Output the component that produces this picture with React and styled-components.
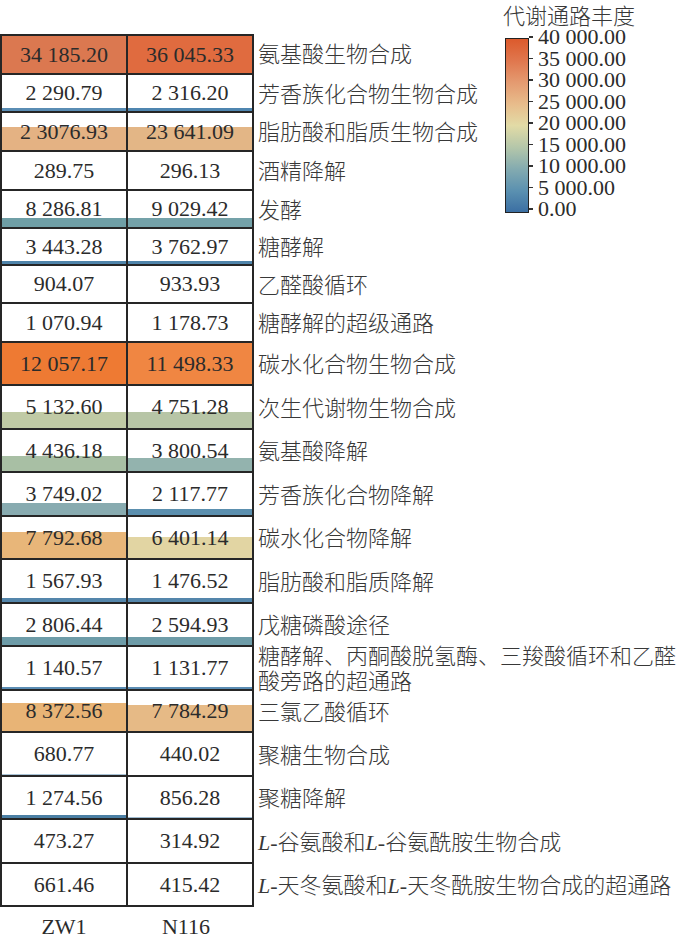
import React from 'react';
import styled, { createGlobalStyle } from 'styled-components';

const GlobalStyle = createGlobalStyle`
  html, body {
    margin: 0;
    padding: 0;
    background: #ffffff;
  }
`;

const LINE = '#262626';
const FULL = '100%';

// h = row height in px, fa/fb = [fill height, colour] for each column
const rows = [
  { a: '34 185.20', b: '36 045.33', label: '氨基酸生物合成', h: 39, fa: [FULL, '#db7850'], fb: [FULL, '#e06b3f'] },
  { a: '2 290.79', b: '2 316.20', label: '芳香族化合物生物合成', h: 38, fa: ['3px', '#5a8db4'], fb: ['3px', '#4f86b0'] },
  { a: '2 3076.93', b: '23 641.09', label: '脂肪酸和脂质生物合成', h: 39, fa: ['23px', '#e4b283'], fb: ['23px', '#e3b686'] },
  { a: '289.75', b: '296.13', label: '酒精降解', h: 39 },
  { a: '8 286.81', b: '9 029.42', label: '发酵', h: 38, fa: ['9px', '#6f9fa6'], fb: ['9px', '#74a2a9'] },
  { a: '3 443.28', b: '3 762.97', label: '糖酵解', h: 37, fa: ['3px', '#4f84aa'], fb: ['3px', '#4f84aa'] },
  { a: '904.07', b: '933.93', label: '乙醛酸循环', h: 38 },
  { a: '1 070.94', b: '1 178.73', label: '糖酵解的超级通路', h: 39 },
  { a: '12 057.17', b: '11 498.33', label: '碳水化合物生物合成', h: 43, fa: [FULL, '#ee7a33'], fb: [FULL, '#f08642'] },
  { a: '5 132.60', b: '4 751.28', label: '次生代谢物生物合成', h: 44, fa: ['16px', '#c0caa5'], fb: ['16px', '#b7c5a6'] },
  { a: '4 436.18', b: '3 800.54', label: '氨基酸降解', h: 43, fa: ['15px', '#a8bfa4'], fb: ['13px', '#93b3ae'] },
  { a: '3 749.02', b: '2 117.77', label: '芳香族化合物降解', h: 44, fa: ['12px', '#88abb0'], fb: ['6px', '#5b8fae'] },
  { a: '7 792.68', b: '6 401.14', label: '碳水化合物降解', h: 43, fa: ['26px', '#e8b679'], fb: ['21px', '#e2d5a3'] },
  { a: '1 567.93', b: '1 476.52', label: '脂肪酸和脂质降解', h: 44, fa: ['4px', '#5486ab'], fb: ['4px', '#5486ab'] },
  { a: '2 806.44', b: '2 594.93', label: '戊糖磷酸途径', h: 43, fa: ['8px', '#6e9ca8'], fb: ['8px', '#6e9ca8'] },
  { a: '1 140.57', b: '1 131.77', label: ['糖酵解、丙酮酸脱氢酶、三羧酸循环和乙醛', '酸旁路的超通路'], h: 44, fa: ['2px', '#5b8db4'], fb: ['2px', '#5b8db4'] },
  { a: '8 372.56', b: '7 784.29', label: '三氯乙酸循环', h: 42, fa: ['28px', '#e8b476'], fb: ['26px', '#e6ba86'] },
  { a: '680.77', b: '440.02', label: '聚糖生物合成', h: 44, fa: ['1px', '#a9c3d6'] },
  { a: '1 274.56', b: '856.28', label: '聚糖降解', h: 43, fa: ['3px', '#4b7fa4'], fb: ['1px', '#9fbbd0'] },
  { a: '473.27', b: '314.92', label: [['L', '-谷氨酸和'], ['L', '-谷氨酰胺生物合成']], h: 44 },
  { a: '661.46', b: '415.42', label: [['L', '-天冬氨酸和'], ['L', '-天冬酰胺生物合成的超通路']], h: 43 },
];

const ticks = ['40 000.00', '35 000.00', '30 000.00', '25 000.00', '20 000.00', '15 000.00', '10 000.00', '5 000.00', '0.00'];

const Page = styled.div`
  position: relative;
  width: 677px;
  padding-top: 34px;
  font-family: "Liberation Serif", "Noto Sans CJK SC", serif;
  color: #2b2b2b;
`;

const Table = styled.div`
  display: flex;
  flex-direction: column;
`;

const Row = styled.div`
  display: flex;
  align-items: stretch;
  height: ${p => p.$h + (p.$top ? 2 : 0)}px;
`;

const Cell = styled.div`
  box-sizing: border-box;
  width: ${p => (p.$lead ? 128 : 126)}px;
  flex-shrink: 0;
  display: flex;
  align-items: center;
  justify-content: center;
  border-right: 2px solid ${LINE};
  border-bottom: 2px solid ${LINE};
  ${p => p.$lead && `border-left: 2px solid ${LINE};`}
  ${p => p.$top && `border-top: 2px solid ${LINE};`}
  background: ${p =>
    p.$fill ? `linear-gradient(to top, ${p.$color} 0, ${p.$color} ${p.$fill}, transparent ${p.$fill})` : 'transparent'};
  font-family: "Liberation Serif", serif;
  font-size: 22px;
  line-height: 24px;
  color: #2b2b2b;
`;

const Label = styled.div`
  flex: 1;
  display: flex;
  flex-direction: column;
  justify-content: center;
  padding-left: 4px;
  font-family: "Liberation Serif", "Noto Sans CJK SC", serif;
  font-size: 22px;
  font-weight: 300;
  line-height: 25px;
  white-space: nowrap;
  color: #383838;
`;

const Ital = styled.i`
  font-style: italic;
  font-weight: 400;
`;

const Footer = styled.div`
  display: flex;
  margin-top: 9px;
  padding-bottom: 6px;
`;

const FooterCell = styled.div`
  width: ${p => (p.$lead ? 128 : 126)}px;
  padding-right: ${p => p.$nudge || 0}px;
  box-sizing: border-box;
  text-align: center;
  font-family: "Liberation Serif", serif;
  font-size: 22px;
  line-height: 22px;
  color: #2b2b2b;
`;

const Legend = styled.div`
  position: absolute;
  top: 3px;
  left: 503px;
  display: flex;
  flex-direction: column;
`;

const LegendTitle = styled.div`
  font-family: "Noto Sans CJK SC", sans-serif;
  font-size: 22px;
  font-weight: 300;
  line-height: 22px;
  color: #383838;
`;

const LegendBody = styled.div`
  display: flex;
  margin-top: 13px;
  margin-left: 2px;
`;

const ColorBar = styled.div`
  box-sizing: border-box;
  width: 24px;
  height: 175px;
  border: 1.5px solid #222222;
  background: linear-gradient(
    to top,
    #3b6fa3 0%,
    #5a90b0 12%,
    #84abb0 25%,
    #b3c6aa 37%,
    #e2dba6 50%,
    #e8bd8c 62%,
    #e49a70 75%,
    #e0784f 87%,
    #dc5a2c 100%
  );
`;

const TickList = styled.div`
  display: flex;
  flex-direction: column;
  margin-top: -12px;
`;

const Tick = styled.div`
  display: flex;
  align-items: center;
  height: 21.5px;
  font-family: "Liberation Serif", serif;
  font-size: 22px;
  line-height: 21.5px;
  color: #2b2b2b;
  white-space: nowrap;

  &::before {
    content: '';
    width: 4px;
    height: 1.5px;
    margin-right: 5px;
    background: #333333;
  }
`;

const renderLabel = label => {
  if (typeof label === 'string') return <span>{label}</span>;
  // italic "L-" prefixed pieces
  if (Array.isArray(label[0])) {
    return (
      <span>
        {label.map((piece, i) => (
          <React.Fragment key={i}>
            <Ital>{piece[0]}</Ital>
            {piece[1]}
          </React.Fragment>
        ))}
      </span>
    );
  }
  return label.map((line, i) => <span key={i}>{line}</span>);
};

const App = () => (
  <>
    <GlobalStyle />
    <Page>
      <Legend>
        <LegendTitle>代谢通路丰度</LegendTitle>
        <LegendBody>
          <ColorBar />
          <TickList>
            {ticks.map(t => (
              <Tick key={t}>{t}</Tick>
            ))}
          </TickList>
        </LegendBody>
      </Legend>

      <Table>
        {rows.map((r, i) => (
          <Row key={i} $h={r.h} $top={i === 0}>
            <Cell $lead $top={i === 0} $fill={r.fa && r.fa[0]} $color={r.fa && r.fa[1]}>
              {r.a}
            </Cell>
            <Cell $top={i === 0} $fill={r.fb && r.fb[0]} $color={r.fb && r.fb[1]}>
              {r.b}
            </Cell>
            <Label>{renderLabel(r.label)}</Label>
          </Row>
        ))}
      </Table>

      <Footer>
        <FooterCell $lead>ZW1</FooterCell>
        <FooterCell $nudge={10}>N116</FooterCell>
      </Footer>
    </Page>
  </>
);

export default App;
